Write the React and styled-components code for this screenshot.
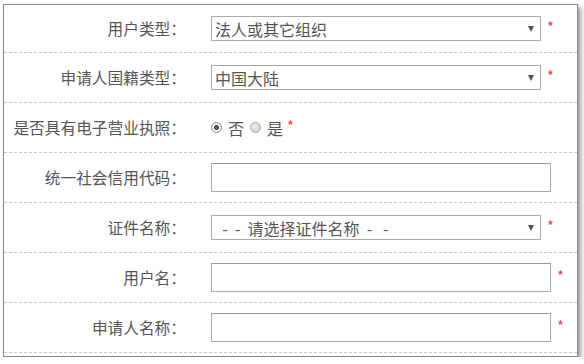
import React from "react";
import styled, { createGlobalStyle } from "styled-components";

const Global = createGlobalStyle`
  html, body { margin: 0; padding: 0; background: #fff; }
  body { font-family: "Noto Sans CJK SC", "Noto Sans", sans-serif; color: #555; }
  * { box-sizing: border-box; }
`;

const Panel = styled.div`
  margin: 4px 0 0 3px;
  width: 575px;
  border: 1px solid #8a8a8a;
  background: #fff;
  padding-bottom: 3px;
  box-shadow: 3px 3px 5px rgba(0, 0, 0, 0.4);
`;

const Row = styled.div`
  display: flex;
  align-items: center;
  height: ${(p) => (p.$first ? 48 : 50)}px;
  border-bottom: 1px dashed #c8c8c8;
`;

const Label = styled.div`
  flex: 0 0 182px;
  text-align: right;
  font-size: 15.7px;
  color: #555;
  white-space: nowrap;
`;

const Field = styled.div`
  display: flex;
  align-items: center;
  margin-left: 25px;
`;

const SelectWrap = styled.div`
  position: relative;
  width: 330px;
  height: 25px;
`;

const Select = styled.select`
  appearance: none;
  -webkit-appearance: none;
  width: 100%;
  height: 100%;
  border: 1px solid #a9a9a9;
  border-radius: 0;
  background: #fff;
  padding: 0 20px 0 3px;
  font-family: inherit;
  font-size: 16px;
  color: #555;
  outline: none;
`;

const Arrow = styled.span`
  position: absolute;
  right: 7px;
  top: 10px;
  width: 0;
  height: 0;
  border-left: 3.5px solid transparent;
  border-right: 3.5px solid transparent;
  border-top: 6px solid #555;
  pointer-events: none;
`;

const TextInput = styled.input`
  width: 340px;
  height: 29px;
  border: 1px solid #a9a9a9;
  border-top-color: #9a9a9a;
  border-radius: 0;
  background: #fff;
  padding: 0 4px;
  font-family: inherit;
  font-size: 15px;
  outline: none;
`;

const Required = styled.span`
  margin-left: ${(p) => p.$gap ?? 6}px;
  color: #f0424a;
  font-size: 15px;
  line-height: 20px;
  align-self: center;
  transform: translateY(-2px);
`;

const RadioGroup = styled.label`
  display: flex;
  align-items: center;
  font-size: 16px;
  color: #555;
  margin-left: ${(p) => p.$ml ?? 0}px;
  cursor: pointer;
`;

const RadioDot = styled.span`
  width: 11px;
  height: 11px;
  border-radius: 50%;
  border: 1px solid ${(p) => (p.$checked ? "#8c8c8c" : "#a8a8a8")};
  background: ${(p) =>
    p.$checked
      ? "radial-gradient(circle, #555 0 2.2px, #f4f4f4 2.8px)"
      : "radial-gradient(circle at 40% 35%, #f0f0f0, #c9c9c9)"};
  margin-right: 6px;
  flex-shrink: 0;
`;

function SelectField({ value, options }) {
  return (
    <Field>
      <SelectWrap>
        <Select defaultValue={value}>
          {options.map((o) => (
            <option key={o} value={o}>
              {o}
            </option>
          ))}
        </Select>
        <Arrow />
      </SelectWrap>
      <Required>*</Required>
    </Field>
  );
}

function InputField({ required }) {
  return (
    <Field>
      <TextInput type="text" />
      {required && <Required>*</Required>}
    </Field>
  );
}

const NB = "\u00a0";
const PLACEHOLDER = `${NB}${NB}-${NB}${NB}-${NB}${NB}请选择证件名称${NB}${NB}-${NB}${NB}${NB}-`;

export default function App() {
  return (
    <>
      <Global />
      <Panel>
        <Row $first>
          <Label>用户类型：</Label>
          <SelectField value="法人或其它组织" options={["法人或其它组织", "自然人"]} />
        </Row>
        <Row>
          <Label>申请人国籍类型：</Label>
          <SelectField value="中国大陆" options={["中国大陆", "港澳台", "外籍"]} />
        </Row>
        <Row>
          <Label>是否具有电子营业执照：</Label>
          <Field>
            <RadioGroup>
              <RadioDot $checked />否
            </RadioGroup>
            <RadioGroup $ml={6}>
              <RadioDot />是
            </RadioGroup>
            <Required $gap={4}>*</Required>
          </Field>
        </Row>
        <Row>
          <Label>统一社会信用代码：</Label>
          <InputField />
        </Row>
        <Row>
          <Label>证件名称：</Label>
          <SelectField value={PLACEHOLDER} options={[PLACEHOLDER, "营业执照"]} />
        </Row>
        <Row>
          <Label>用户名：</Label>
          <InputField required />
        </Row>
        <Row>
          <Label>申请人名称：</Label>
          <InputField required />
        </Row>
      </Panel>
    </>
  );
}
